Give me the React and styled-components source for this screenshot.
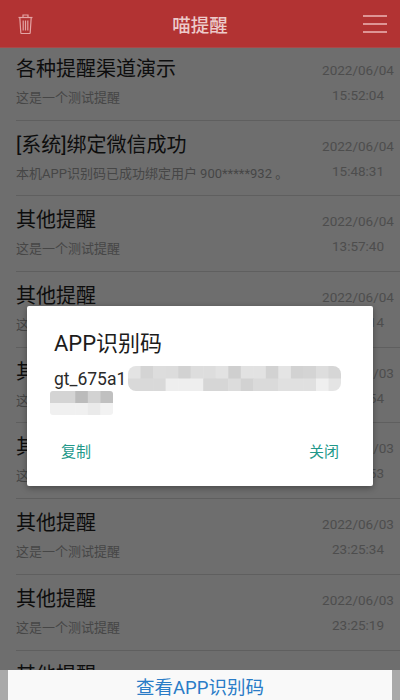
import React from "react";
import styled, { createGlobalStyle } from "styled-components";

const Global = createGlobalStyle`
  html, body { margin: 0; padding: 0; }
  body { font-family: Roboto, "Noto Sans CJK SC", sans-serif; background: #6e6e6e; }
`;
const Page = styled.div`
  position: relative;
  width: 400px;
  height: 700px;
  overflow: hidden;
  background: #6e6e6e;
`;
const Header = styled.header`
  position: relative;
  z-index: 1;
  height: 48px;
  box-sizing: border-box;
  padding: 0 13px;
  display: flex;
  align-items: center;
  background: #b23333;
  border-bottom: 1px solid #a84a4a;
`;
const HeaderSide = styled.div`
  flex: 1;
  display: flex;
  justify-content: ${(p) => (p.$end ? "flex-end" : "flex-start")};
`;
const TrashIcon = styled.svg`
  display: block;
  margin-left: 5px;
`;
const HeaderTitle = styled.h1`
  margin: 0;
  font-size: 18.5px;
  font-weight: 500;
  color: #eccaca;
`;
const List = styled.div`
  margin-top: -3px;
`;
const Row = styled.div`
  height: 75.7px;
  box-sizing: border-box;
  margin-left: 16px;
  padding: 9px 6px 0 0;
  display: flex;
  justify-content: space-between;
  border-bottom: 1px solid #5f5f5f;
`;
const Main = styled.div`
  display: flex;
  flex-direction: column;
  gap: 5px;
  min-width: 0;
`;
const Title = styled.div`
  font-size: 20px;
  line-height: 30px;
  color: #0d0d0d;
  white-space: nowrap;
`;
const Sub = styled.div`
  font-size: 13px;
  line-height: 18px;
  color: #464646;
  white-space: nowrap;
`;
const Stamp = styled.div`
  flex: none;
  width: 72px;
  padding-top: 7px;
  display: flex;
  flex-direction: column;
  align-items: center;
  gap: 7px;
  font-size: 13.5px;
  line-height: 18px;
  color: #4d4d4d;
  white-space: nowrap;
`;
const Footer = styled.div`
  position: absolute;
  z-index: 2;
  left: 0;
  right: 0;
  bottom: 0;
  height: 30px;
  padding: 0 8px;
  background: #a9a9a9;
`;
const FooterButton = styled.button`
  display: block;
  width: 100%;
  height: 30px;
  padding: 6px 0 0;
  border: 0;
  background: #f9f9f9;
  font-family: inherit;
  font-size: 18.5px;
  line-height: 24px;
  color: #2a7cc7;
`;
const Dialog = styled.div`
  position: absolute;
  z-index: 3;
  left: 27px;
  top: 306px;
  width: 346px;
  height: 180px;
  box-sizing: border-box;
  padding: 22px 27px 0;
  background: #fff;
  border-radius: 2px;
  box-shadow: 0 2px 6px rgba(0, 0, 0, 0.35);
  display: flex;
  flex-direction: column;
`;
const DialogTitle = styled.h2`
  margin: 0;
  font-size: 22px;
  line-height: 32px;
  font-weight: 400;
  color: #1c1c1c;
`;
const CodeLine = styled.div`
  margin-top: 6px;
  display: flex;
  align-items: center;
  height: 25px;
`;
const CodeText = styled.span`
  margin-top: 2px;
  font-size: 17.5px;
  line-height: 25px;
  color: #2a2a2a;
`;
const Mosaic = styled.svg`
  display: block;
  flex: none;
  margin-left: ${(p) => p.$offset}px;
`;
const Actions = styled.div`
  margin-top: 26px;
  padding: 0 7px;
  display: flex;
  justify-content: space-between;
`;
const Action = styled.button`
  padding: 0;
  border: 0;
  background: none;
  font-family: inherit;
  font-size: 15px;
  line-height: 22px;
  color: #22988a;
`;

const rows = [
  ["各种提醒渠道演示", "这是一个测试提醒", "2022/06/04", "15:52:04"],
  ["[系统]绑定微信成功", "本机APP识别码已成功绑定用户 900*****932 。", "2022/06/04", "15:48:31"],
  ["其他提醒", "这是一个测试提醒", "2022/06/04", "13:57:40"],
  ["其他提醒", "这是一个测试提醒", "2022/06/04", "13:57:14"],
  ["其他提醒", "这是一个测试提醒", "2022/06/03", "23:26:54"],
  ["其他提醒", "这是一个测试提醒", "2022/06/03", "23:25:53"],
  ["其他提醒", "这是一个测试提醒", "2022/06/03", "23:25:34"],
  ["其他提醒", "这是一个测试提醒", "2022/06/03", "23:25:19"],
  ["其他提醒", "这是一个测试提醒", "2022/06/03", "23:25:02"],
];

const top1 = ["e3","d4","dd","dc","d2","dd","dd","e2","cf","e2","e2","d2","e4","d2","d4","dd","d6"];
const bot1 = ["d9","d9","d9","ee","ee","ee","d6","d6","dc","d2","da","da","e0","e0","e0","ef","e4"];
const top2 = ["d4","d4","bb","d2","c0"];
const bot2 = ["f0","f0","f0","ea","f2"];

const Cells = ({ rowsData, w, h, rx }) => (
  <>
    <defs>
      <clipPath id={`m${rx}`}>
        <rect width={w} height={h} rx={rx} />
      </clipPath>
    </defs>
    <g clipPath={`url(#m${rx})`}>
      {rowsData.map((cells, r) =>
        cells.map((c, i) => (
          <rect key={`${r}-${i}`} x={i * (w / cells.length)} y={r * (h / 2)} width={w / cells.length + 0.5} height={h / 2 + 0.5} fill={`#${c}${c}${c}`} />
        ))
      )}
    </g>
  </>
);

const Trash = () => (
  <TrashIcon width="15" height="20" viewBox="0 0 15 20" fill="none" stroke="#e3a4a4" strokeWidth="1.2">
    <path d="M0.5 3.5h14" />
    <path d="M5 3.3V1h5v2.3" />
    <path d="M1.8 3.5l1 15.2c0 .5.3.8.8.8h7.8c.5 0 .8-.3.8-.8l1-15.2" />
    <path d="M5.2 6.5v10M7.5 6.5v10M9.8 6.5v10" />
  </TrashIcon>
);
const Menu = () => (
  <svg width="24" height="18" viewBox="0 0 24 18" fill="none" stroke="#edb6b6" strokeWidth="1.5">
    <path d="M0 1h24M0 9h24M0 17h24" />
  </svg>
);

export default function App() {
  return (
    <Page>
      <Global />
      <Header>
        <HeaderSide>
          <Trash />
        </HeaderSide>
        <HeaderTitle>喵提醒</HeaderTitle>
        <HeaderSide $end>
          <Menu />
        </HeaderSide>
      </Header>
      <List>
        {rows.map(([t, s, d, h], i) => (
          <Row key={i}>
            <Main>
              <Title>{t}</Title>
              <Sub>{s}</Sub>
            </Main>
            <Stamp>
              <span>{d}</span>
              <span>{h}</span>
            </Stamp>
          </Row>
        ))}
      </List>
      <Footer>
        <FooterButton>查看APP识别码</FooterButton>
      </Footer>
      <Dialog>
        <DialogTitle>APP识别码</DialogTitle>
        <CodeLine>
          <CodeText>gt_675a1</CodeText>
          <Mosaic $offset={2} width="213" height="25" viewBox="0 0 213 25">
            <Cells rowsData={[top1, bot1]} w={213} h={25} rx={8} />
          </Mosaic>
        </CodeLine>
        <Mosaic $offset={-4} width="63" height="24" viewBox="0 0 63 24">
          <Cells rowsData={[top2, bot2]} w={63} h={24} rx={3} />
        </Mosaic>
        <Actions>
          <Action>复制</Action>
          <Action>关闭</Action>
        </Actions>
      </Dialog>
    </Page>
  );
}
